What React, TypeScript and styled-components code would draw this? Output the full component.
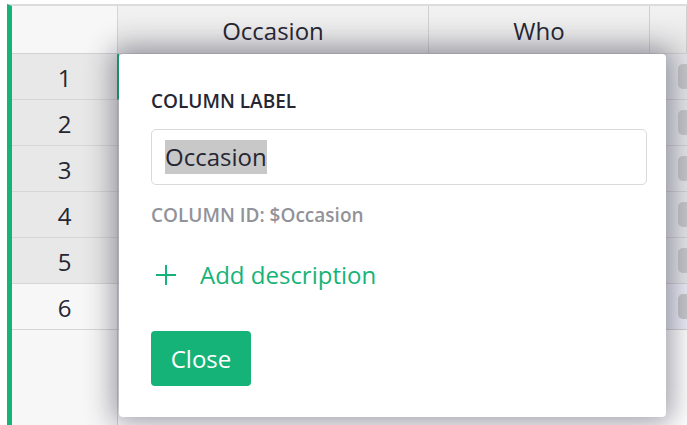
import React from "react";
import styled, { createGlobalStyle } from "styled-components";

const Global = createGlobalStyle`
  html, body { margin: 0; padding: 0; background: #ffffff; }
  body { font-family: "Open Sans", "Noto Sans", sans-serif; overflow: hidden; }
  * { box-sizing: border-box; }
`;

const Frame = styled.div`
  width: 687px;
  height: 425px;
  padding: 4px 0 0 7px;
  overflow: hidden;
`;

const Sheet = styled.div`
  position: relative;
  height: 100%;
  border-left: 5px solid #16b378;
  border-top: 2px solid #dcdcdc;
  background: #ffffff;
`;

const cols = "106px 311px 221px 1fr";

const HeaderRow = styled.div`
  display: grid;
  grid-template-columns: ${cols};
  height: 48px;
  border-bottom: 1px solid #d2d2d2;
`;

const Corner = styled.div`
  background: #f7f7f7;
  border-right: 1px solid #d4d4d4;
`;

const HeaderCell = styled.div`
  display: flex;
  align-items: center;
  justify-content: center;
  background: linear-gradient(#f2f2f2, #e6e6e6);
  border-right: 1px solid #d0d0d0;
  font-size: 24px;
  color: #262633;
  padding-top: 2px;
`;

const Row = styled.div`
  display: grid;
  grid-template-columns: ${cols};
  height: 46px;
`;

const RowNum = styled.div<{ $selected: boolean }>`
  display: flex;
  align-items: center;
  justify-content: center;
  background: ${(p) => (p.$selected ? "#e8e8e8" : "#f7f7f7")};
  border-right: 1px solid #d4d4d4;
  border-bottom: 1px solid #d6d6d6;
  font-size: 24px;
  color: #262633;
  padding-top: 1px;
`;

const Cell = styled.div<{ $active?: boolean; $selected?: boolean }>`
  position: relative;
  background: ${(p) => (p.$selected ? "#e6e6ea" : "#ececf6")};
  border-right: 1px solid #d8d8d8;
  border-bottom: 1px solid #d2d2d2;
  border-left: ${(p) => (p.$active ? "2px solid #16b378" : "0")};
  margin-left: ${(p) => (p.$active ? "-1px" : "0")};
`;

const ChipCell = styled(Cell)`
  display: flex;
  align-items: center;
  padding-left: 28px;
`;

const Chip = styled.div`
  width: 40px;
  height: 25px;
  border-radius: 5px;
  background: #c8c8cb;
`;

const Filler = styled.div`
  display: grid;
  grid-template-columns: ${cols};
  height: 120px;
`;

const FillerNum = styled.div`
  background: #f7f7f7;
  border-right: 1px solid #d4d4d4;
`;

const Popup = styled.div`
  position: absolute;
  left: 107px;
  top: 48px;
  width: 547px;
  height: 363px;
  background: #ffffff;
  border-radius: 4px;
  box-shadow: 0 0 28px 6px rgba(38, 38, 60, 0.45);
  padding: 35px 19px 0 32px;
  display: flex;
  flex-direction: column;
  align-items: flex-start;
`;

const Label = styled.div`
  font-size: 19px;
  font-weight: 600;
  color: #262633;
  line-height: 24px;
`;

const InputBox = styled.div`
  margin-top: 16px;
  width: 496px;
  height: 56px;
  border: 1px solid #d9d9d9;
  border-radius: 5px;
  padding: 0 13px;
  display: flex;
  align-items: center;
`;

const Selected = styled.span`
  background: #c8c8c8;
  font-size: 24px;
  line-height: 34px;
  color: #262633;
`;

const ColumnId = styled.div`
  margin-top: 18px;
  font-size: 19px;
  font-weight: 600;
  color: #929299;
  line-height: 24px;
`;

const AddLink = styled.div`
  margin-top: 32px;
  display: flex;
  align-items: center;
  gap: 23px;
  padding-left: 4px;
  color: #16b378;
  font-size: 24px;
  line-height: 32px;
`;

const CloseButton = styled.button`
  margin-top: 40px;
  width: 100px;
  height: 55px;
  border: 0;
  border-radius: 4px;
  background: #16b378;
  color: #ffffff;
  font-family: inherit;
  font-size: 24px;
  padding: 0;
`;

const PlusIcon = () => (
  <svg width="22" height="22" viewBox="0 0 22 22" fill="none" stroke="#16b378" strokeWidth="2">
    <path d="M11 1V21M1 11H21" />
  </svg>
);

export default function App() {
  const rows = [1, 2, 3, 4, 5, 6];
  return (
    <Frame>
      <Global />
      <Sheet>
        <HeaderRow>
          <Corner />
          <HeaderCell>Occasion</HeaderCell>
          <HeaderCell>Who</HeaderCell>
          <HeaderCell />
        </HeaderRow>
        {rows.map((n) => (
          <Row key={n}>
            <RowNum $selected={n <= 5}>{n}</RowNum>
            <Cell $active={n === 1} $selected={n <= 5} />
            <Cell $selected={n <= 5} />
            <ChipCell $selected={n <= 5}>
              <Chip />
            </ChipCell>
          </Row>
        ))}
        <Filler>
          <FillerNum />
          <div />
          <div />
          <div />
        </Filler>
        <Popup>
          <Label>COLUMN LABEL</Label>
          <InputBox>
            <Selected>Occasion</Selected>
          </InputBox>
          <ColumnId>COLUMN ID: $Occasion</ColumnId>
          <AddLink>
            <PlusIcon />
            <span>Add description</span>
          </AddLink>
          <CloseButton>Close</CloseButton>
        </Popup>
      </Sheet>
    </Frame>
  );
}
